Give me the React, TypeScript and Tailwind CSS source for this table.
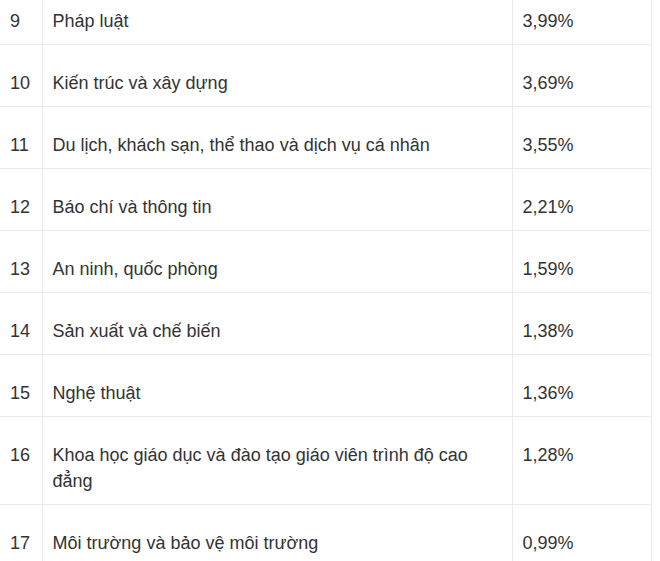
const rows: [string, string, string][] = [
  ["9", "Pháp luật", "3,99%"],
  ["10", "Kiến trúc và xây dựng", "3,69%"],
  ["11", "Du lịch, khách sạn, thể thao và dịch vụ cá nhân", "3,55%"],
  ["12", "Báo chí và thông tin", "2,21%"],
  ["13", "An ninh, quốc phòng", "1,59%"],
  ["14", "Sản xuất và chế biến", "1,38%"],
  ["15", "Nghệ thuật", "1,36%"],
  ["16", "Khoa học giáo dục và đào tạo giáo viên trình độ cao đẳng", "1,28%"],
  ["17", "Môi trường và bảo vệ môi trường", "0,99%"],
]

export default function App() {
  return (
    <div className="h-[561px] w-[660px] overflow-hidden bg-white">
      <table
        className="-mt-[18px] w-[651px] table-fixed border-collapse text-[18px] leading-[26px] text-[#333]"
        style={{ fontFamily: '"Liberation Sans", Arial, sans-serif' }}
      >
        <colgroup>
          <col className="w-[42px]" />
          <col className="w-[470px]" />
          <col className="w-[139px]" />
        </colgroup>
        <tbody>
          {rows.map(([n, name, pct]) => (
            <tr key={n} className="border-t border-[#ebebeb]">
              <td className="border-r border-[#ebebeb] px-[10px] pt-[25px] pb-[10px] align-top">{n}</td>
              <td className="border-r border-[#ebebeb] px-[10px] pt-[25px] pb-[10px] align-top">{name}</td>
              <td className="border-r border-[#ebebeb] px-[10px] pt-[25px] pb-[10px] align-top">{pct}</td>
            </tr>
          ))}
        </tbody>
      </table>
    </div>
  )
}
